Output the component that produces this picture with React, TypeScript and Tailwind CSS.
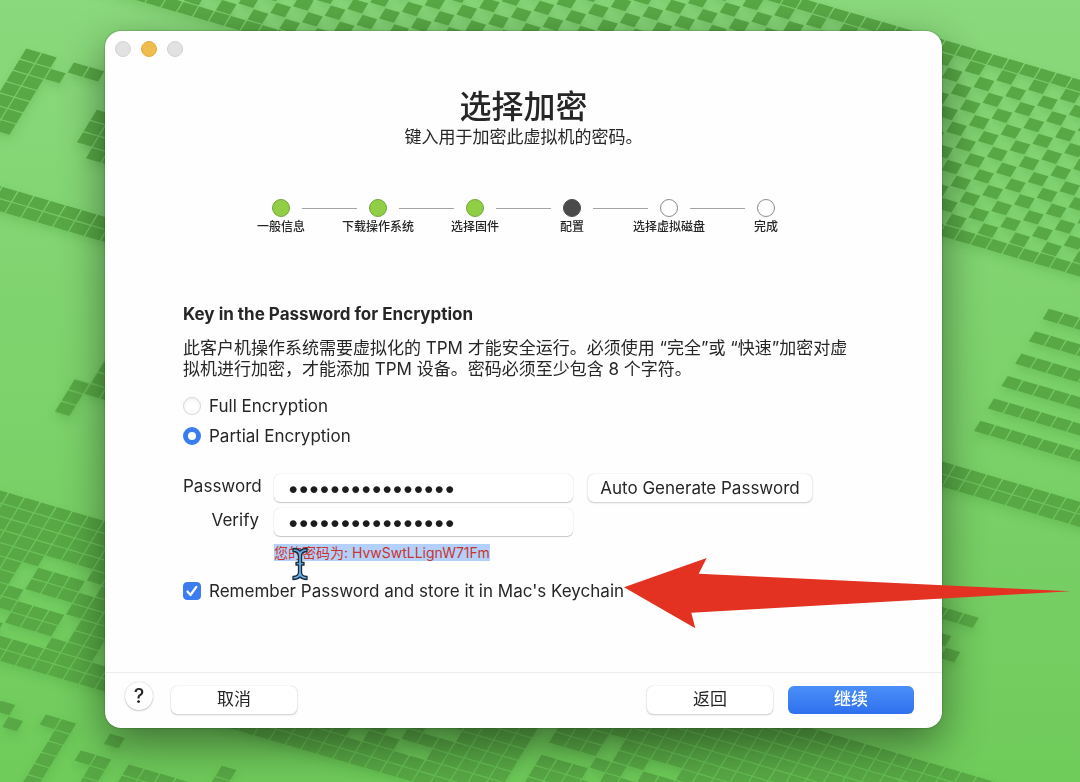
import { useState } from 'react';

type StepState = 'done' | 'current' | 'todo';

const STEPS: { label: string; state: StepState }[] = [
  { label: '一般信息', state: 'done' },
  { label: '下载操作系统', state: 'done' },
  { label: '选择固件', state: 'done' },
  { label: '配置', state: 'current' },
  { label: '选择虚拟磁盘', state: 'todo' },
  { label: '完成', state: 'todo' },
];

const DOT_STYLES: Record<StepState, string> = {
  done: 'border-[#74a63a] bg-[#8fce45]',
  current: 'border-[#4a4a4a] bg-[#4a4a4a]',
  todo: 'border-[#8c8c8c] bg-white',
};

/** One patch of slanted wallpaper tiles, '#' is a tile. */
interface Patch {
  x: number;
  y: number;
  rows: string[];
}

/** Wide checkered band across the top. */
const checkerRows = Array.from({ length: 15 }, (_, r) =>
  Array.from({ length: 76 }, (_, c) => (r === 0 || r === 14 || (c + r) % 2 === 0 ? '#' : '.')).join(''),
);

/** Holes in the lower band, per row. */
const HOLES: Record<number, number[]> = {
  4: [3, 4, 5],
  5: [2, 6, 35, 39],
  6: [2, 35, 39, 42, 43],
  7: [3, 4, 5, 35, 36, 37, 38, 41],
  8: [6, 29, 30, 35, 39],
  9: [2, 6, 9, 27, 35],
  10: [3, 4, 5, 9, 25, 28, 29, 35],
  11: [35],
};

const lowerRows = Array.from({ length: 13 }, (_, r) =>
  Array.from({ length: 68 }, (_, c) => (HOLES[r]?.includes(c - 3) ? '.' : '#')).join(''),
);

const PATCHES: Patch[] = [
  { x: -18, y: -236, rows: checkerRows },
  { x: -18.3, y: 491, rows: lowerRows },
  { x: 14.6, y: 51, rows: ['.##.##', '.###', '.##', '.##', '.##', '###', '.##'] },
  { x: 101, y: 117, rows: ['##', '##', '##', '.##'] },
  { x: -8.9, y: 189.5, rows: ['#########', '##########'] },
  { x: 92.6, y: 364, rows: ['.##', '.##', '###', '#', '#'] },
  { x: 5, y: 708, rows: ['#'] },
  { x: 12.7, y: 724, rows: ['#'] },
  { x: 50, y: 721.7, rows: ['##', '.#', '.#', '.#', '.#', '.#'] },
  { x: 114.3, y: 741, rows: ['#'] },
  { x: 85, y: 757.7, rows: ['##', '.#', '.#'] },
  { x: 133, y: 771.7, rows: ['####', '##'] },
  { x: 226, y: 773, rows: ['#', '#'] },
  {
    x: 1053,
    y: 316,
    rows: ['########', '', '########', '', '########', '', '########', '', '########', '', '########'],
  },
  { x: 944, y: 468, rows: ['##########', '##########'] },
  { x: 936.8, y: 611.3, rows: ['###'] },
  { x: 941, y: 639, rows: ['#'] },
  { x: 950, y: 655, rows: ['#'] },
];

function patchPath({ rows }: Patch) {
  return rows
    .flatMap((row, r) =>
      [...row].map((cell, c) => (cell === '#' ? `M${c - 0.46} ${r - 0.45}h.92v.9h-.92z` : '')),
    )
    .join('');
}

function Wallpaper() {
  return (
    <svg
      aria-hidden="true"
      viewBox="0 0 1080 782"
      preserveAspectRatio="xMidYMid slice"
      className="absolute inset-0 h-full w-full"
    >
      <defs>
        <filter id="tileShadow" x="0" y="0" width="1080" height="800" filterUnits="userSpaceOnUse">
          <feDropShadow dx="0" dy="5" stdDeviation="4" floodColor="#3f9430" floodOpacity="0.25" />
        </filter>
      </defs>
      <g fill="#58a845" filter="url(#tileShadow)">
        {PATCHES.map((patch, i) => (
          <path key={i} transform={`matrix(15.87 4.65 -6.85 11.2 ${patch.x} ${patch.y})`} d={patchPath(patch)} />
        ))}
      </g>
    </svg>
  );
}

function Stepper() {
  return (
    <ol className="mx-auto mt-[50px] grid w-full max-w-[582px] grid-cols-6">
      {STEPS.map((step, i) => (
        <li key={step.label} className="flex flex-col items-center gap-0.5">
          <div className="flex w-full items-center gap-3">
            <span className={`h-px flex-1 ${i === 0 ? 'bg-transparent' : 'bg-[#a3a3a3]'}`} />
            <span className={`size-[18px] rounded-full border ${DOT_STYLES[step.state]}`} />
            <span className={`h-px flex-1 ${i === STEPS.length - 1 ? 'bg-transparent' : 'bg-[#a3a3a3]'}`} />
          </div>
          <span className="text-xs font-medium whitespace-nowrap">{step.label}</span>
        </li>
      ))}
    </ol>
  );
}

function EncryptionOption({
  label,
  checked,
  onSelect,
}: {
  label: string;
  checked: boolean;
  onSelect: () => void;
}) {
  return (
    <label className="flex items-center gap-2">
      <input
        type="radio"
        name="encryption"
        checked={checked}
        onChange={onSelect}
        className="size-[18px] appearance-none rounded-full border border-[#d6d6d6] bg-white shadow-inner checked:border-[5px] checked:border-[#3b7df0] checked:shadow-none"
      />
      {label}
    </label>
  );
}

const FIELD =
  'h-7 w-full rounded-md bg-white px-[14px] font-[Inter] text-[22px] font-bold text-[#1c1c1c] shadow-[0_0_1px_rgba(0,0,0,0.2),0_1px_1px_rgba(0,0,0,0.2)] outline-none';
const BUTTON =
  'h-7 rounded-md bg-white text-[#262626] shadow-[0_0_1px_rgba(0,0,0,0.25),0_1px_2px_rgba(0,0,0,0.18)]';

function TextCursor() {
  return (
    <svg aria-hidden="true" viewBox="0 0 20 36" className="absolute top-1 left-4 h-9 w-5">
      <path
        d="M3 2.500C6 2.500 8.300 3.200 10 5c1.700-1.800 4-2.500 7-2.500v3c-3.500 0-5.500 1.500-5.500 4.500v6.500H14v2.500h-2.500V26c0 3 2 4.500 5.500 4.500v3c-3 0-5.300-.7-7-2.500-1.700 1.800-4 2.500-7 2.500v-3c3.500 0 5.500-1.500 5.500-4.500v-7H6v-2.500h2.500V10c0-3-2-4.500-5.500-4.500z"
        fill="#68aee6"
        stroke="#1c2b3a"
        strokeWidth="1.300"
        strokeLinejoin="round"
      />
    </svg>
  );
}

export default function App() {
  const [mode, setMode] = useState<'full' | 'partial'>('partial');
  const [remember, setRemember] = useState(true);

  return (
    <div
      lang="zh-CN"
      className="relative flex min-h-screen overflow-hidden bg-linear-to-b from-[#8ad97c] to-[#6fcb5a] pt-[31px] pr-[138px] pb-[54px] pl-[105px] font-[Inter,'Noto_Sans_CJK_SC',sans-serif] text-[17px] text-[#262626]"
    >
      <Wallpaper />

      <main className="relative flex flex-1 flex-col rounded-2xl bg-[#fefefe] shadow-[0_0_2px_rgba(0,0,0,0.4),0_16px_44px_rgba(0,0,0,0.45)]">
        <div className="flex gap-[10px] px-[10px] pt-[10px]">
          <button aria-label="关闭" className="size-4 rounded-full border border-[#d2d2d2] bg-[#e2e2e2]" />
          <button aria-label="最小化" className="size-4 rounded-full border border-[#e0ad45] bg-[#f0bc4b]" />
          <button aria-label="缩放" className="size-4 rounded-full border border-[#d2d2d2] bg-[#e2e2e2]" />
        </div>

        <header className="mt-8 text-center">
          <h1 className="text-[32px] leading-9 font-medium">选择加密</h1>
          <p className="leading-6">键入用于加密此虚拟机的密码。</p>
        </header>

        <Stepper />

        <form className="mt-[67px] flex flex-1 flex-col px-[78px]" onSubmit={e => e.preventDefault()}>
          <h2 className="leading-6 font-bold">Key in the Password for Encryption</h2>
          <p className="mt-3 leading-[21px]">
            此客户机操作系统需要虚拟化的 TPM 才能安全运行。必须使用 “完全”或 “快速”加密对虚拟机进行加密，才能添加 TPM 设备。密码必须至少包含 8 个字符。
          </p>

          <div className="mt-[14px] flex flex-col gap-[6px] leading-6">
            <EncryptionOption label="Full Encryption" checked={mode === 'full'} onSelect={() => setMode('full')} />
            <EncryptionOption
              label="Partial Encryption"
              checked={mode === 'partial'}
              onSelect={() => setMode('partial')}
            />
          </div>

          <div className="mt-[26px] grid grid-cols-[76px_299px_224px] gap-x-[15px] gap-y-[6px] leading-6">
            <label htmlFor="password" className="text-right">
              Password
            </label>
            <input id="password" type="password" defaultValue="HvwSwtLLignW71Fm" className={FIELD} />
            <button type="button" className={BUTTON}>
              Auto Generate Password
            </button>
            <label htmlFor="verify" className="text-right">
              Verify
            </label>
            <input id="verify" type="password" defaultValue="HvwSwtLLignW71Fm" className={FIELD} />
            <div className="relative col-start-2 leading-5">
              <span className="bg-[#b3d0fa] text-sm text-[#c8352f]">您的密码为: HvwSwtLLignW71Fm</span>
              <TextCursor />
            </div>
          </div>

          <label className="mt-4 flex items-center gap-2 leading-6">
            <span className="relative flex">
              <input
                type="checkbox"
                checked={remember}
                onChange={e => setRemember(e.target.checked)}
                className="size-[18px] appearance-none rounded border border-[#c8c8c8] bg-white checked:border-[#3b7df0] checked:bg-[#3b7df0]"
              />
              {remember && (
                <svg aria-hidden="true" viewBox="0 0 18 18" className="pointer-events-none absolute inset-0">
                  <path
                    d="M4.500 9.500L7.500 13L13.300 4.800"
                    fill="none"
                    stroke="white"
                    strokeWidth="2.200"
                    strokeLinecap="round"
                    strokeLinejoin="round"
                  />
                </svg>
              )}
            </span>
            Remember Password and store it in Mac's Keychain
          </label>
        </form>

        <footer className="flex items-start border-t border-[#ededed] pt-[13px] pr-7 pb-[14px] pl-5">
          <button
            aria-label="帮助"
            className="-mt-1 mr-[18px] size-7 rounded-full bg-white text-[20px] leading-none font-medium shadow-[0_0_1px_rgba(0,0,0,0.25),0_1px_2px_rgba(0,0,0,0.2)]"
          >
            ?
          </button>
          <button className={`${BUTTON} w-[126px]`}>取消</button>
          <button className={`${BUTTON} mr-[15px] ml-auto w-[126px]`}>返回</button>
          <button className="h-7 w-[126px] rounded-md bg-linear-to-b from-[#4a8ff8] to-[#2f70ee] font-medium text-white">
            继续
          </button>
        </footer>
      </main>

      {/* Callout arrow pointing at the keychain option */}
      <svg
        aria-hidden="true"
        viewBox="0 0 447 72"
        className="pointer-events-none absolute top-[557px] left-[624px] h-[72px] w-[447px]"
      >
        <path d="M0 30.300L82.700 1L74.700 16.700L446.500 34.300L67.300 55.700L71.300 71.300Z" fill="#e33122" />
      </svg>
    </div>
  );
}
